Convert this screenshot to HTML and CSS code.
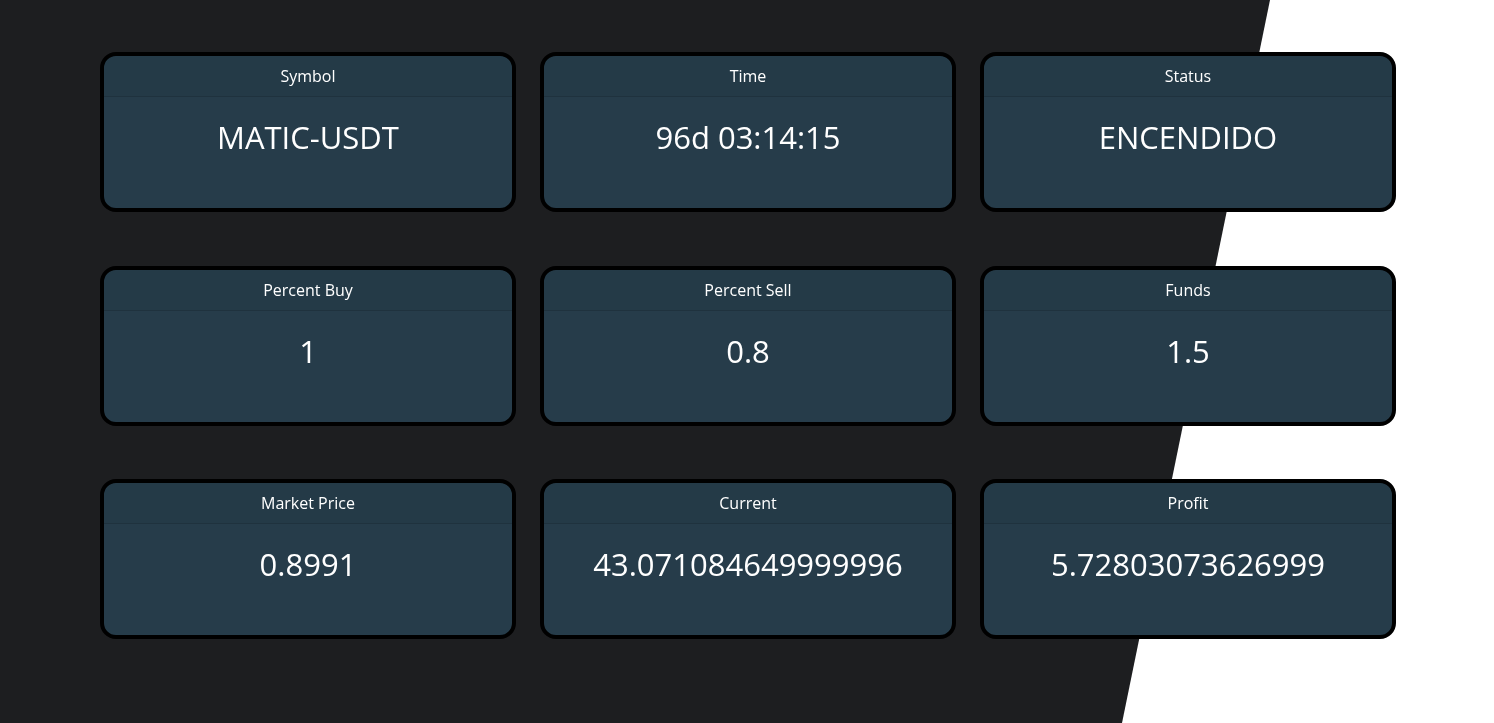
FILE: index.html
```html
<!DOCTYPE html>
<html lang="es">
<head>
<meta charset="utf-8">
<title>Bot Dashboard</title>
<link rel="stylesheet" href="styles.css">
</head>
<body>
<div class="backdrop"></div>
<main class="dashboard">
  <section class="card"><div class="card-header">Symbol</div><div class="card-body">MATIC-USDT</div></section>
  <section class="card"><div class="card-header">Time</div><div class="card-body">96d 03:14:15</div></section>
  <section class="card"><div class="card-header">Status</div><div class="card-body">ENCENDIDO</div></section>
  <section class="card"><div class="card-header">Percent Buy</div><div class="card-body">1</div></section>
  <section class="card"><div class="card-header">Percent Sell</div><div class="card-body">0.8</div></section>
  <section class="card"><div class="card-header">Funds</div><div class="card-body">1.5</div></section>
  <section class="card"><div class="card-header">Market Price</div><div class="card-body">0.8991</div></section>
  <section class="card"><div class="card-header">Current</div><div class="card-body">43.071084649999996</div></section>
  <section class="card"><div class="card-header">Profit</div><div class="card-body">5.72803073626999</div></section>
</main>
</body>
</html>
```
FILE: styles.css
```css
html, body {
  margin: 0;
  padding: 0;
  height: 100%;
}
body {
  background: #ffffff;
  font-family: "Open Sans", "Noto Sans", sans-serif;
  color: #ffffff;
  overflow: hidden;
}
.backdrop {
  position: fixed;
  inset: 0;
  background: #1d1e20;
  clip-path: polygon(0 0, 1270px 0, 1122px 100%, 0 100%);
  z-index: 0;
}
.dashboard {
  position: relative;
  z-index: 1;
  width: 1296px;
  margin: 0 0 0 100px;
  padding-top: 52px;
  display: grid;
  grid-template-columns: repeat(3, 1fr);
  grid-template-rows: 160px 160px 160px;
  column-gap: 24px;
  row-gap: 53.5px;
}
.card {
  box-sizing: border-box;
  height: 160px;
  background: #263c4a;
  border: 4px solid #000000;
  border-radius: 16px;
  display: flex;
  flex-direction: column;
  overflow: hidden;
}
.card-header {
  padding: 8px 16px;
  font-size: 16px;
  line-height: 24px;
  text-align: center;
  border-bottom: 1px solid rgba(0, 0, 0, 0.125);
  background: rgba(0, 0, 0, 0.03);
}
.card-body {
  padding: 16px;
  font-size: 31px;
  line-height: 48px;
  text-align: center;
}
```
